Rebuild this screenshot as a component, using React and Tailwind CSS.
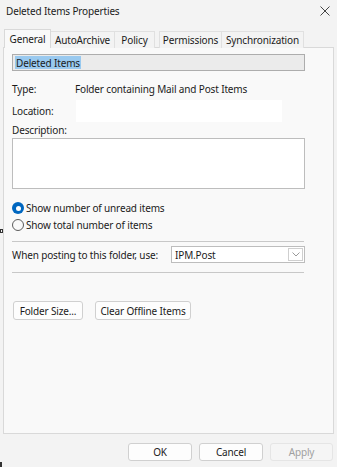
import React from "react";

function Radio({ checked }) {
  return checked ? (
    <span className="w-[12px] h-[12px] rounded-full bg-[#0067c0] flex items-center justify-center shrink-0">
      <span className="w-[5px] h-[5px] rounded-full bg-white" />
    </span>
  ) : (
    <span className="w-[12px] h-[12px] rounded-full border border-[#5c5c5c] bg-[#f9f9f9] shrink-0" />
  );
}

function Btn({ children, className = "" }) {
  return (
    <div
      className={
        "h-[18px] flex items-center justify-center rounded-[3px] border border-[#d0d0d0] bg-[#fdfdfd] text-[#1b1b1b] " +
        className
      }
    >
      {children}
    </div>
  );
}

export default function App() {
  return (
    <div className="w-[337px] h-[467px] bg-[#f3f3f3] relative overflow-hidden font-['Noto_Sans',sans-serif] text-[10px] tracking-[-0.15px] text-[#1b1b1b] leading-none">
      {/* title bar */}
      <div className="h-[20px] flex items-center justify-between pl-[6px] pr-[6px] pt-[1px]">
        <span className="text-[10px] text-[#1b1b1b]">Deleted Items Properties</span>
        <svg width="10" height="10" viewBox="0 0 10 10" className="mr-[1px]">
          <path d="M0.5 0.5 L9.5 9.5 M9.5 0.5 L0.5 9.5" stroke="#444" strokeWidth="1" />
        </svg>
      </div>

      {/* tabs */}
      <div className="flex items-end h-[18px] mt-[10px] pl-[4px] relative z-10">
        <div className="w-[47px] h-[19px] bg-[#f9f9f9] border border-b-0 border-[#d9d9d9] flex items-center justify-center pb-[1px]">
          General
        </div>
        <div className="w-[64px] h-[17px] border border-b-0 border-l-0 border-[#e0e0e0] bg-[#f3f3f3] flex items-center justify-center">
          AutoArchive
        </div>
        <div className="w-[40px] h-[17px] border border-b-0 border-l-0 border-[#e0e0e0] bg-[#f3f3f3] flex items-center justify-center">
          Policy
        </div>
        <div className="w-[63px] h-[17px] ml-[4px] border border-b-0 border-[#e0e0e0] bg-[#f3f3f3] flex items-center justify-center">
          Permissions
        </div>
        <div className="w-[82px] h-[17px] border border-b-0 border-l-0 border-[#e0e0e0] bg-[#f3f3f3] flex items-center justify-center">
          Synchronization
        </div>
      </div>

      {/* panel */}
      <div className="ml-[3px] w-[331px] h-[387px] -mt-px border border-[#d9d9d9] bg-[#f9f9f9] flex flex-col pl-[8px]">
        <div className="mt-[6px] w-[293px] h-[17px] bg-[#ebebeb] border border-[#adadad] flex items-center pl-[2px]">
          <span className="bg-[#99c9ef] px-[1px] h-[13px] flex items-center">Deleted Items</span>
        </div>

        <div className="mt-[10px] h-[16px] flex items-center">
          <span className="w-[63px]">Type:</span>
          <span>Folder containing Mail and Post Items</span>
        </div>

        <div className="mt-[3px] h-[22px] flex items-center">
          <span className="w-[64px]">Location:</span>
          <div className="w-[206px] h-[22px] bg-white" />
        </div>

        <div className="h-[16px] flex items-center">Description:</div>

        <div className="w-[293px] h-[51px] bg-white border border-[#bdbdbd]" />

        <div className="mt-[11px] h-[16px] flex items-center gap-[2px]">
          <Radio checked />
          <span>Show number of unread items</span>
        </div>
        <div className="mt-px h-[16px] flex items-center gap-[2px]">
          <Radio />
          <span>Show total number of items</span>
        </div>

        <div className="mt-[8px] w-[292px] border-t border-[#c8c8c8]" />

        <div className="mt-[4px] h-[17px] flex items-center">
          <span className="w-[159px]">When posting to this folder, use:</span>
          <div className="w-[134px] h-[17px] bg-white border border-[#bdbdbd] flex items-center justify-between pl-[3px] pr-px">
            <span>IPM.Post</span>
            <div className="w-[15px] h-[13px] border border-[#cfcfcf] bg-white flex items-center justify-center">
              <svg width="8" height="5" viewBox="0 0 8 5">
                <path d="M0.5 0.5 L4 4 L7.5 0.5" fill="none" stroke="#9a9a9a" strokeWidth="1" />
              </svg>
            </div>
          </div>
        </div>

        <div className="mt-[9px] w-[292px] border-t border-[#c8c8c8]" />

        <div className="mt-[28px] flex gap-[12px] pl-px">
          <Btn className="w-[70px] h-[19px]">Folder Size...</Btn>
          <Btn className="w-[96px] h-[19px]">Clear Offline Items</Btn>
        </div>
      </div>

      {/* bottom buttons */}
      <div className="mt-[9px] flex justify-end gap-[7px] pr-[4px]">
        <Btn className="w-[64px] border-[#0067c0]">OK</Btn>
        <Btn className="w-[64px]">Cancel</Btn>
        <div className="w-[63px] h-[18px] flex items-center justify-center rounded-[3px] border border-[#e5e5e5] bg-[#f5f5f5] text-[#a0a0a0]">
          Apply
        </div>
      </div>

      {/* stray marks at left edge */}
      <div className="absolute left-0 top-[229px] w-[3px] h-[4px] border border-[#333]" />
      <div className="absolute left-0 top-[462px] w-[2px] h-[5px] bg-[#333]" />
    </div>
  );
}
